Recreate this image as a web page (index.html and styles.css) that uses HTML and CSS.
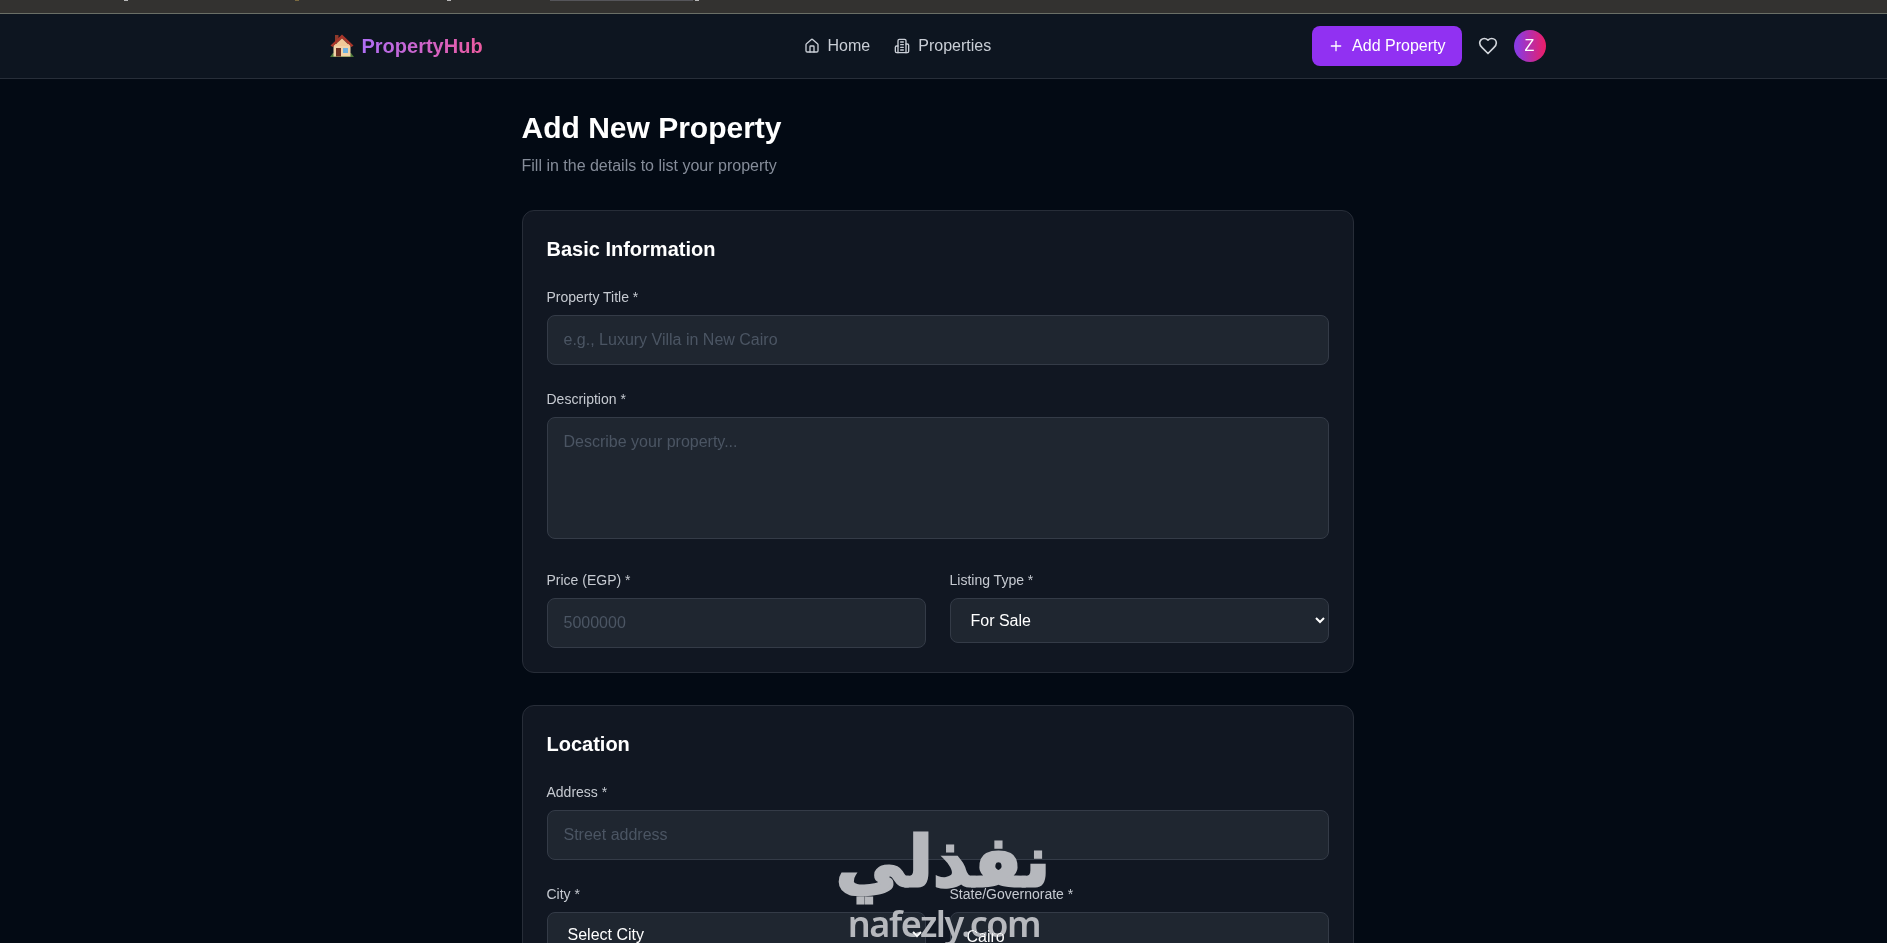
FILE: index.html
```html
<!DOCTYPE html>
<html lang="en">

<head>
    <meta charset="UTF-8">
    <meta name="viewport" content="width=device-width, initial-scale=1.0">
    <title>Add New Property</title>

    <link rel="stylesheet" href="styles.css">
</head>

<body>
    <div class="browserStrip">
        <span class="tabBit tabA"></span>
        <span class="tabBit tabB"></span>
        <span class="tabBit tabC"></span>
        <span class="tabLine"></span>
        <span class="tabBit"></span>
    </div>

    <nav class="navbar">
        <div class="navInner">
            <a class="brand">
                <svg class="brandIcon" viewBox="0 0 24 24">
                    <rect x="5" y="1" width="3.5" height="8" fill="#8d3a2c"/>
                    <path d="M0 23 L3 19 L21 19 L24 23 Z" fill="#4f7a3a"/>
                    <rect x="3.5" y="10" width="17" height="12.5" fill="#f2d3a8"/>
                    <path d="M12 0.5 L23.5 11.5 L21.5 13 L12 4.5 L2.5 13 L0.5 11.5 Z" fill="#a8362a"/>
                    <path d="M12 4.5 L20 12 L4 12 Z" fill="#f0c998"/>
                    <rect x="6" y="14" width="5" height="8.5" fill="#6e2f22"/>
                    <rect x="13" y="14" width="5" height="5" fill="#6fb2e0"/>
                </svg>
                <span class="brandText">PropertyHub</span>
            </a>

            <div class="navLinks">
                <a class="navLink">
                    <svg class="icon" viewBox="0 0 24 24">
                        <path d="M15 21v-8a1 1 0 0 0-1-1h-4a1 1 0 0 0-1 1v8"/>
                        <path d="M3 10a2 2 0 0 1 .709-1.528l7-5.999a2 2 0 0 1 2.582 0l7 5.999A2 2 0 0 1 21 10v9a2 2 0 0 1-2 2H5a2 2 0 0 1-2-2z"/>
                    </svg>
                    Home
                </a>
                <a class="navLink">
                    <svg class="icon" viewBox="0 0 24 24">
                        <path d="M6 22V4a2 2 0 0 1 2-2h8a2 2 0 0 1 2 2v18Z"/>
                        <path d="M6 12H4a2 2 0 0 0-2 2v6a2 2 0 0 0 2 2h2"/>
                        <path d="M18 9h2a2 2 0 0 1 2 2v9a2 2 0 0 1-2 2h-2"/>
                        <path d="M10 6h4"/>
                        <path d="M10 10h4"/>
                        <path d="M10 14h4"/>
                        <path d="M10 18h4"/>
                    </svg>
                    Properties
                </a>
            </div>

            <div class="navRight">
                <a class="addBtn">
                    <svg class="icon" viewBox="0 0 24 24">
                        <path d="M5 12h14"/>
                        <path d="M12 5v14"/>
                    </svg>
                    Add Property
                </a>
                <svg class="heart" viewBox="0 0 24 24">
                    <path d="M19 14c1.49-1.46 3-3.21 3-5.5A5.5 5.5 0 0 0 16.5 3c-1.76 0-3 .5-4.5 2-1.5-1.5-2.74-2-4.5-2A5.5 5.5 0 0 0 2 8.5c0 2.3 1.5 4.05 3 5.5l7 7Z"/>
                </svg>
                <div class="avatar">Z</div>
            </div>
        </div>
    </nav>

    <main class="main">
        <h1>Add New Property</h1>
        <p class="subtitle">Fill in the details to list your property</p>

        <section class="card">
            <h3>Basic Information</h3>
            <div class="field">
                <label>Property Title *</label>
                <input type="text" placeholder="e.g., Luxury Villa in New Cairo">
            </div>
            <div class="field">
                <label>Description *</label>
                <textarea rows="4" placeholder="Describe your property..."></textarea>
            </div>
            <div class="twoCol">
                <div>
                    <label>Price (EGP) *</label>
                    <input type="text" placeholder="5000000">
                </div>
                <div>
                    <label>Listing Type *</label>
                    <select>
                        <option>For Sale</option>
                        <option>For Rent</option>
                    </select>
                </div>
            </div>
        </section>

        <section class="card">
            <h3>Location</h3>
            <div class="field">
                <label>Address *</label>
                <input type="text" placeholder="Street address">
            </div>
            <div class="twoCol">
                <div>
                    <label>City *</label>
                    <select>
                        <option>Select City</option>
                    </select>
                </div>
                <div>
                    <label>State/Governorate *</label>
                    <input type="text" value="Cairo">
                </div>
            </div>
        </section>
    </main>

    <div class="watermark">
        <div class="wmArabic" dir="rtl" lang="ar">نفذلي</div>
        <div class="wmLatin">nafezly.com</div>
    </div>
</body>

</html>
```

FILE: styles.css
```css
* {
    box-sizing: border-box;
}

html,
body {
    height: 943px;
    overflow: hidden;
}

body {
    margin: 0;
    padding-right: 12px;
    background-color: #030a14;
    color: white;
    font-family: "Liberation Sans", Arial, sans-serif;
    font-size: 16px;
    line-height: 24px;
}

.browserStrip {
    height: 14px;
    margin-right: -12px;
    padding-left: 124px;
    background-color: #333230;
    border-bottom: 1px solid #6a6f66;
    display: flex;
    align-items: flex-start;
}

.tabBit {
    width: 4px;
    height: 1px;
    background-color: #b8b8b8;
}

.tabA {
    margin-right: 167px;
}

.tabB {
    margin-right: 148px;
    background-color: #7a6a40;
}

.tabC {
    margin-right: 99px;
}

.tabLine {
    width: 143px;
    height: 1px;
    margin-right: 2px;
    background-color: #55555a;
}

.navbar {
    height: 65px;
    margin-right: -12px;
    padding-right: 12px;
    background-color: #0d1520;
    border-bottom: 1px solid #272e39;
}

.navInner {
    width: 1216px;
    height: 64px;
    margin: 0 auto;
    display: flex;
    justify-content: space-between;
    align-items: center;
}

.brand {
    display: flex;
    align-items: center;
    gap: 8px;
}

.brandIcon {
    width: 24px;
    height: 24px;
}

.brandText {
    font-size: 20px;
    font-weight: 700;
    line-height: 28px;
    background: linear-gradient(to right, #b06ef5, #ec5a9f);
    -webkit-background-clip: text;
    background-clip: text;
    color: transparent;
}

.navLinks {
    display: flex;
    gap: 24px;
}

.navLink {
    display: flex;
    align-items: center;
    gap: 8px;
    color: #c9ced6;
}

.icon {
    width: 16px;
    height: 16px;
    fill: none;
    stroke: currentColor;
    stroke-width: 2;
    stroke-linecap: round;
    stroke-linejoin: round;
}

.navRight {
    display: flex;
    align-items: center;
    gap: 16px;
}

.addBtn {
    display: flex;
    align-items: center;
    gap: 8px;
    height: 40px;
    padding: 0 16px;
    background-color: #9131f2;
    border-radius: 8px;
}

.heart {
    width: 20px;
    height: 20px;
    fill: none;
    stroke: #d1d5db;
    stroke-width: 2;
    stroke-linecap: round;
    stroke-linejoin: round;
}

.avatar {
    width: 32px;
    height: 32px;
    border-radius: 50%;
    background: linear-gradient(to right, #8b3ae0 10%, #e81f6c 95%);
    display: flex;
    align-items: center;
    justify-content: center;
    font-size: 16px;
}

.main {
    width: 832px;
    margin: 0 auto;
    padding-top: 31px;
}

h1 {
    margin: 0 0 8px;
    font-size: 30px;
    line-height: 36px;
    font-weight: 700;
}

.subtitle {
    margin: 0 0 32px;
    color: #858c99;
}

.card {
    margin-bottom: 32px;
    padding: 24px;
    background-color: #111722;
    border: 1px solid #272d38;
    border-radius: 12px;
}

h3 {
    margin: 0 0 24px;
    font-size: 20px;
    line-height: 28px;
    font-weight: 700;
}

.field {
    margin-bottom: 24px;
}

label {
    display: block;
    margin-bottom: 8px;
    font-size: 14px;
    line-height: 20px;
    color: #c6cad1;
}

input,
textarea,
select {
    width: 100%;
    padding: 12px 16px;
    font-family: inherit;
    font-size: 16px;
    line-height: 24px;
    color: white;
    background-color: #1f2630;
    border: 1px solid #343b47;
    border-radius: 8px;
}

textarea {
    resize: none;
}

::placeholder {
    color: #4b5563;
    opacity: 1;
}

.twoCol {
    display: grid;
    grid-template-columns: 1fr 1fr;
    gap: 24px;
}

.watermark {
    position: absolute;
    left: 838px;
    top: 818px;
    width: 212px;
    color: #b6b8bd;
    text-align: center;
    pointer-events: none;
    mix-blend-mode: lighten;
}

.wmArabic {
    font-family: "DejaVu Sans", sans-serif;
    font-size: 70px;
    font-weight: 700;
    line-height: 89px;
    white-space: nowrap;
    -webkit-text-stroke: 3px #b6b8bd;
}

.wmLatin {
    font-family: "Noto Sans", sans-serif;
    font-size: 36px;
    font-weight: 600;
    line-height: 34px;
    letter-spacing: -1.5px;
    white-space: nowrap;
}
```
